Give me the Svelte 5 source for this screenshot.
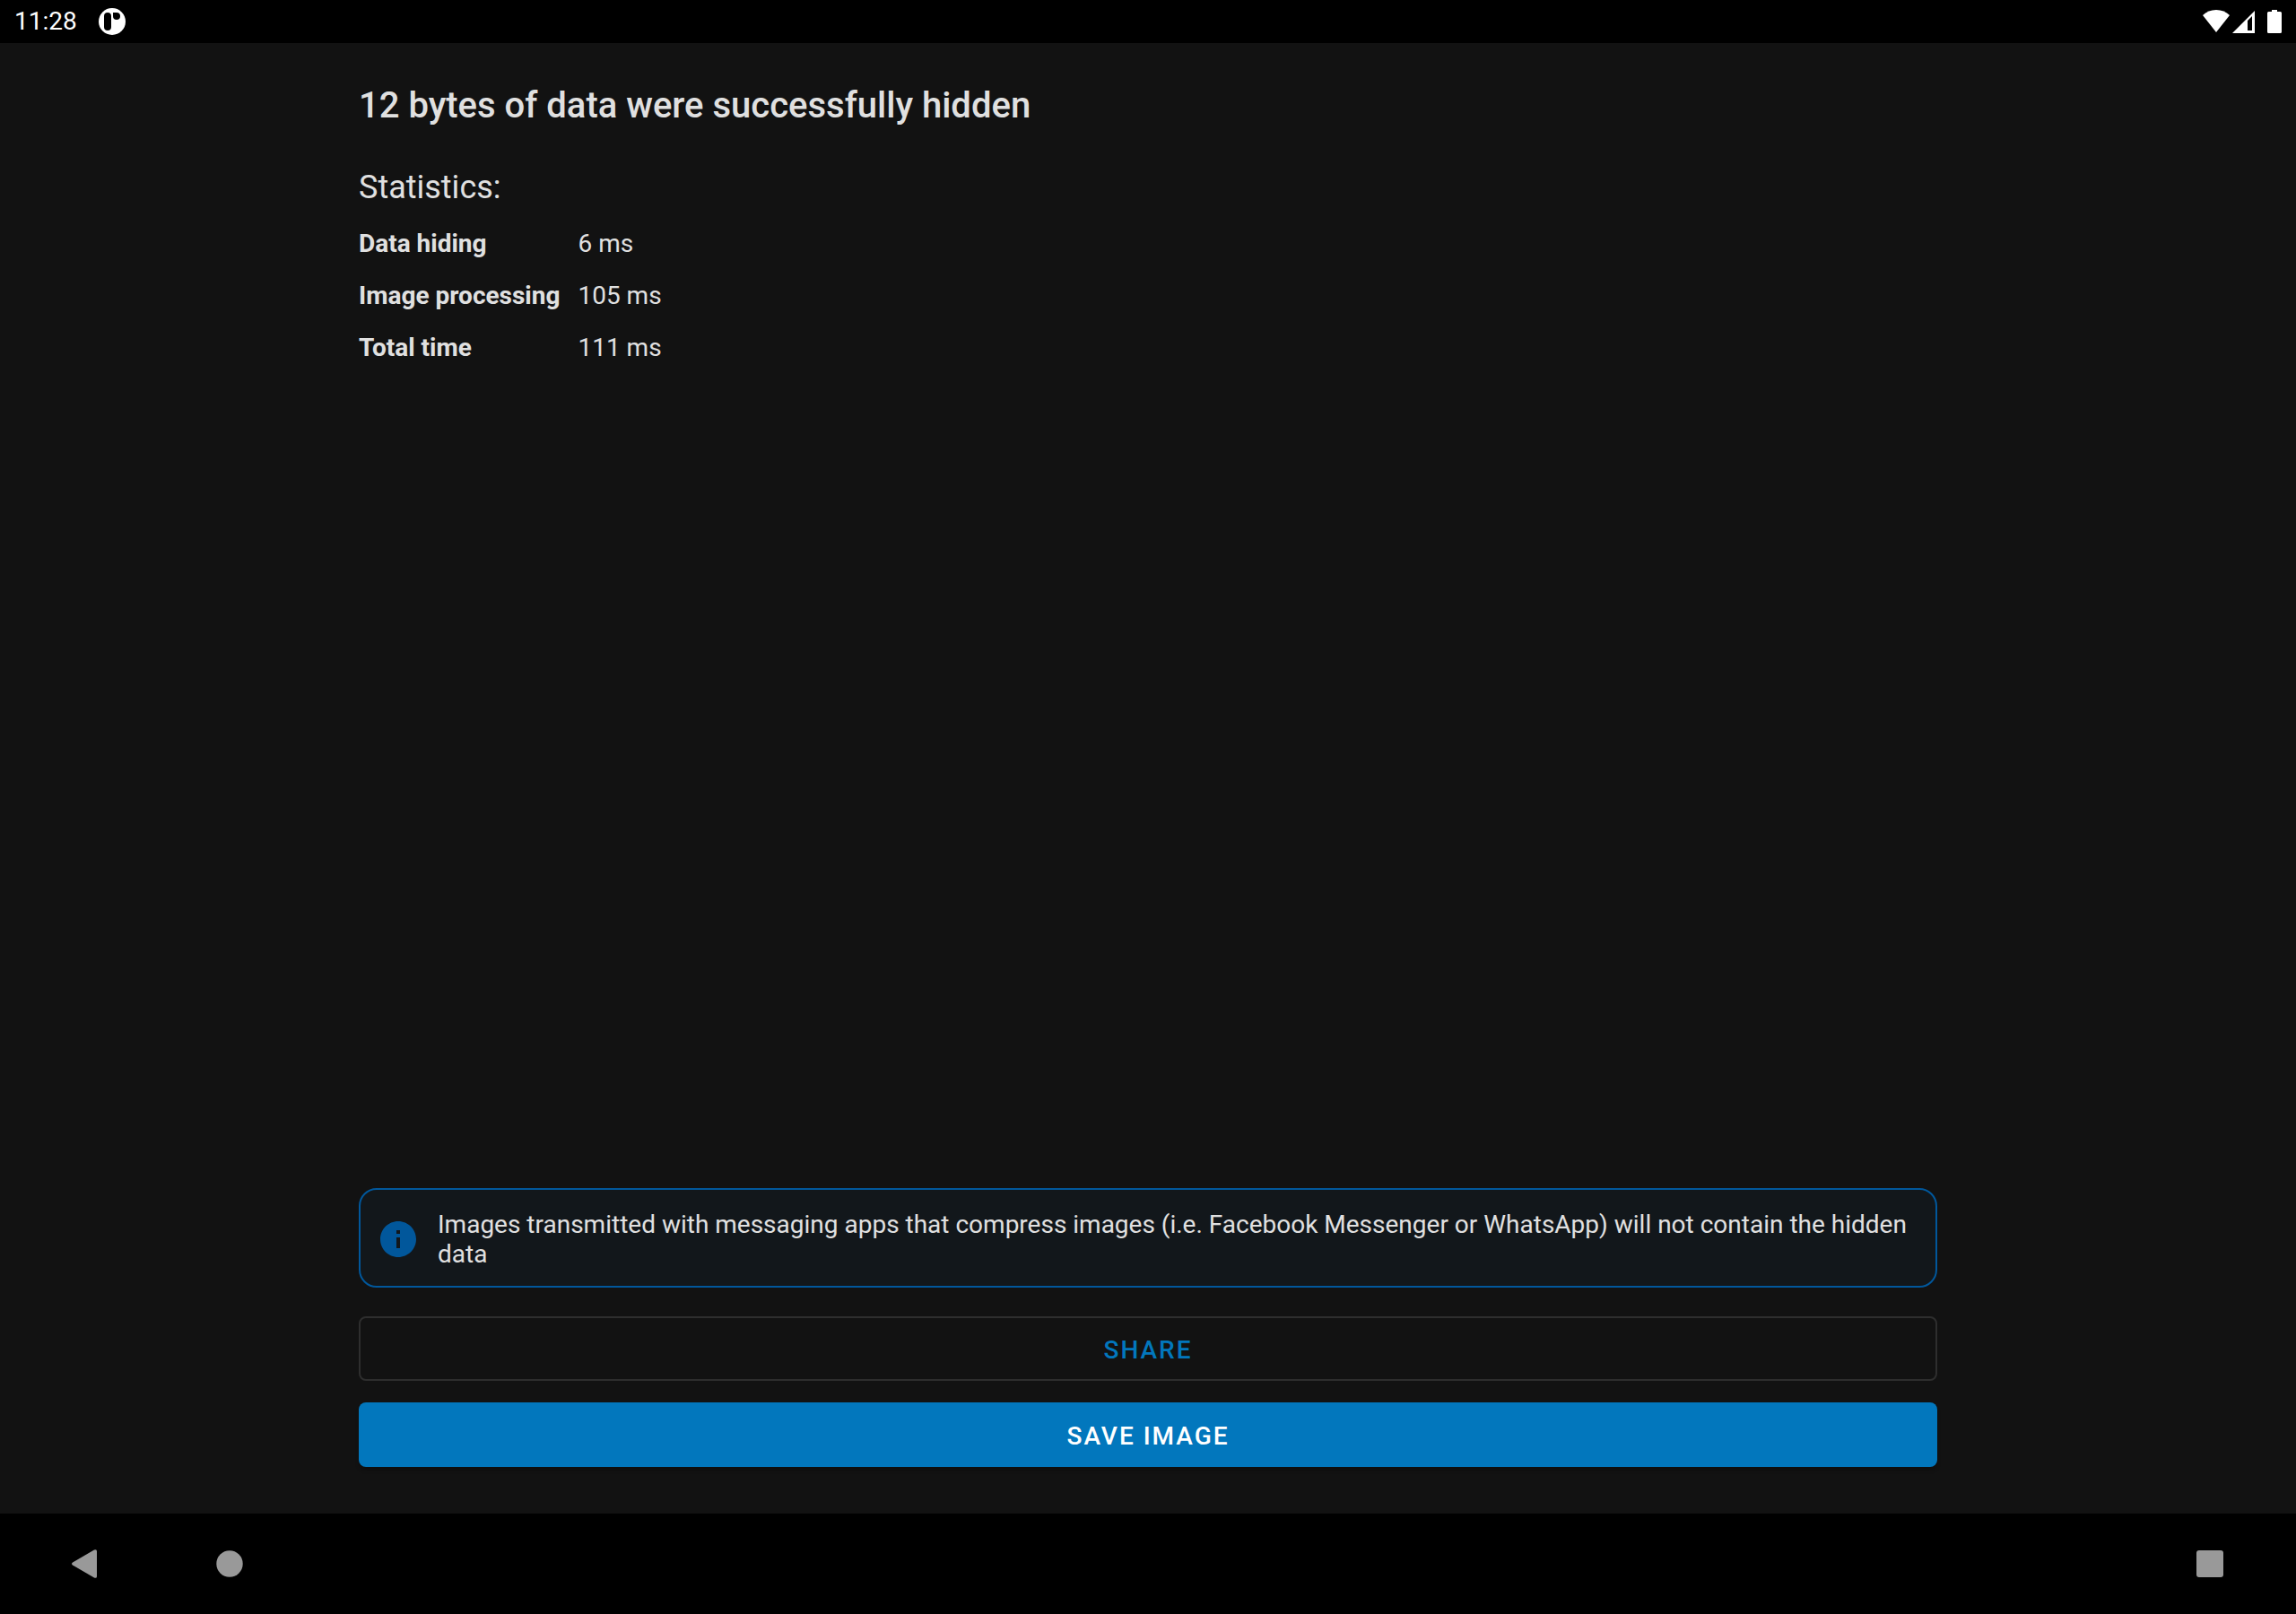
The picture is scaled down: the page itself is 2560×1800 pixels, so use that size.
<script>
  const statistics = [
    { label: 'Data hiding', value: '6 ms' },
    { label: 'Image processing', value: '105 ms' },
    { label: 'Total time', value: '111 ms' },
  ];
</script>

<div class="screen">
  <header class="status">
    <div class="group">
      <time>11:28</time>
      <svg width="30" height="30" viewBox="0 0 30 30" aria-hidden="true">
        <circle cx="15" cy="15" r="15" fill="#fff" />
        <rect x="6" y="5" width="8" height="20" rx="4" fill="#000" />
        <circle cx="20" cy="9" r="4" fill="#000" />
        <path d="M16 5h4v4h-4z" fill="#000" />
      </svg>
    </div>
    <div class="indicators">
      <svg width="30" height="26" viewBox="0 0 30 26" aria-hidden="true">
        <path d="M0 6Q6 0 15 0T30 6L15 25Z" fill="#fff" />
      </svg>
      <svg class="signal" width="26" height="26" viewBox="0 0 26 26" aria-hidden="true">
        <path d="M0 26L25 1V26ZM17 12V23H22V7Z" fill="#fff" fill-rule="evenodd" />
      </svg>
      <svg width="16" height="26" viewBox="0 0 16 26" aria-hidden="true">
        <path d="M5 0h6v2h3.500q1.500 0 1.500 1.500v21q0 1.500-1.500 1.500h-13q-1.500 0-1.500-1.500v-21q0-1.500 1.500-1.500h3.500z" fill="#fff" />
      </svg>
    </div>
  </header>

  <main>
    <h1>12 bytes of data were successfully hidden</h1>
    <h2>Statistics:</h2>
    <table>
      <tbody>
        {#each statistics as row}
          <tr>
            <th scope="row">{row.label}</th>
            <td>{row.value}</td>
          </tr>
        {/each}
      </tbody>
    </table>

    <div class="notice" role="note">
      <svg width="48" height="48" viewBox="0 0 24 24" aria-hidden="true">
        <path
          d="M12 2C6.480 2 2 6.480 2 12s4.480 10 10 10 10-4.480 10-10S17.520 2 12 2zm1 15h-2v-6h2v6zm0-8h-2V7h2v2z"
          fill="#01579b"
        />
      </svg>
      <p>
        Images transmitted with messaging apps that compress images (i.e. Facebook Messenger or
        WhatsApp) will not contain the hidden data
      </p>
    </div>

    <div class="actions">
      <button class="outlined" type="button">SHARE</button>
      <button class="filled" type="button">SAVE IMAGE</button>
    </div>
  </main>

  <nav aria-label="System navigation">
    <div class="group keys">
      <button type="button" aria-label="Back">
        <svg width="32" height="32" viewBox="0 0 32 32">
          <path d="M3 14.500L27 0.400Q30 -0.500 30 2V30Q30 32.500 27 31.600L3 17.500Q1 16 3 14.500Z" fill="#999" />
        </svg>
      </button>
      <button type="button" aria-label="Home">
        <svg width="32" height="32" viewBox="0 0 32 32">
          <circle cx="16" cy="16" r="14.700" fill="#999" />
        </svg>
      </button>
    </div>
    <button type="button" aria-label="Recent apps">
      <svg width="32" height="32" viewBox="0 0 32 32">
        <rect x="1" y="1" width="30" height="30" rx="3" fill="#999" />
      </svg>
    </button>
  </nav>
</div>

<style>
  :global(body) {
    margin: 0;
    background: #121212;
  }

  .screen {
    display: flex;
    flex-direction: column;
    min-height: 100vh;
    background: #121212;
    color: #e0e0e0;
    font-family: Roboto, sans-serif;
    font-size: 28px;
    line-height: 33px;
  }

  svg {
    display: block;
    flex: none;
  }

  .status {
    display: flex;
    align-items: center;
    justify-content: space-between;
    box-sizing: border-box;
    height: 48px;
    padding: 0 16px;
    background: #000;
    color: #fff;
  }

  time {
    line-height: 34px;
  }

  .group {
    display: flex;
    align-items: center;
    gap: 24px;
  }

  .indicators {
    display: flex;
    align-items: center;
  }

  .signal {
    margin: 0 13px 0 3px;
  }

  main {
    display: flex;
    flex: 1;
    flex-direction: column;
    box-sizing: border-box;
    width: 100%;
    max-width: 1840px;
    margin: 0 auto;
    padding: 46px 40px 52px;
  }

  h1,
  h2,
  p {
    margin: 0;
    font-weight: 400;
  }

  h1 {
    font-size: 40px;
    font-weight: 500;
    line-height: 48px;
  }

  h2 {
    margin-top: 46px;
    font-size: 36px;
    line-height: 42px;
  }

  table {
    align-self: flex-start;
    margin: 13px 0 auto;
    border-collapse: collapse;
  }

  th,
  td {
    padding: 12px 0;
    line-height: 34px;
    text-align: left;
  }

  th {
    padding-right: 20px;
    font-weight: 700;
  }

  .notice {
    display: flex;
    align-items: center;
    gap: 20px;
    margin-top: 32px;
    padding: 22px 32px 19px 18px;
    border: 2px solid #01579b;
    border-radius: 20px;
    background: #12171b;
  }

  .actions {
    display: flex;
    flex-direction: column;
    gap: 24px;
    margin-top: 32px;
  }

  button {
    padding: 0;
    border: 0;
    background: none;
    font: inherit;
    cursor: pointer;
  }

  .actions button {
    height: 72px;
    padding-top: 2px;
    border-radius: 8px;
    font-weight: 500;
    letter-spacing: 2px;
  }

  .actions .outlined {
    border: 2px solid #2e2e2e;
    color: #0277bd;
  }

  .actions .filled {
    background: #0277bd;
    box-shadow: 0 4px 4px rgb(0 0 0 / 20%);
    color: #fff;
  }

  nav {
    display: flex;
    align-items: center;
    justify-content: space-between;
    height: 112px;
    padding: 0 80px 0 78px;
    background: #000;
  }

  .keys {
    gap: 130px;
  }
</style>
